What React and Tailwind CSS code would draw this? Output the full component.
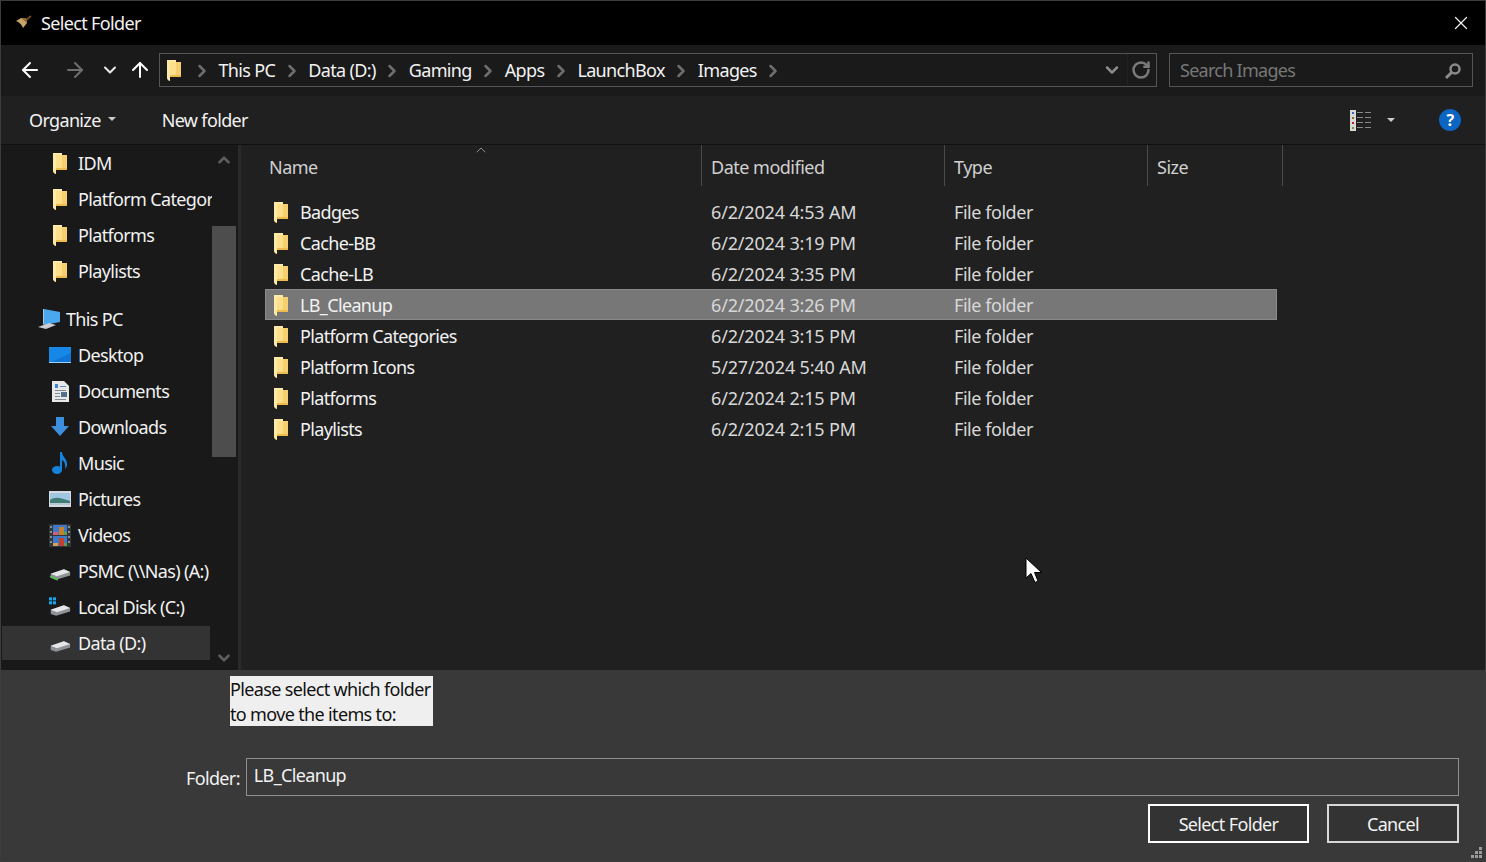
import React from 'react'
import { ArrowLeft, ArrowRight, ArrowUp, ChevronDown, ChevronRight, ChevronUp, RotateCw, X } from 'lucide-react'

function FolderIcon() {
  return (
    <svg width="14" height="21" viewBox="0 0 14 21" className="shrink-0">
      <path d="M0 0 L9 0 L9 2 L14 2 L14 17 L3 17 L3 21 L1 20 L0 18 Z" fill="#f7cf6e" />
      <path d="M0 0 L9 0 L9 2 L4 2 L3 17 L3 21 L1 20 L0 18 Z" fill="#fde9a8" />
      <path d="M3 2 L9 2 L9 14 L3 17 Z" fill="#fce08c" />
      <path d="M3 15 L14 15 L14 17 L3 17 Z" fill="#eebb4f" />
    </svg>
  )
}

function PcIcon() {
  return (
    <svg width="24" height="22" viewBox="0 0 24 22">
      <path d="M7 1 L23 4 L23 14 L7 17 Z" fill="#4aa8ee" />
      <path d="M6 1 L7 1 L7 17 L6 16 Z" fill="#a8c8e0" />
      <path d="M1 19 L12 15 L19 17 L9 21 Z" fill="#c9ccd0" />
    </svg>
  )
}

function DesktopIcon() {
  return (
    <svg width="22" height="16" viewBox="0 0 22 16">
      <rect width="22" height="16" fill="#1788e8" />
      <path d="M0 16 L22 6 L22 16 Z" fill="#0f76d6" />
      <rect y="15" width="22" height="1" fill="#9dd0f5" />
    </svg>
  )
}

function DocumentsIcon() {
  return (
    <svg width="17" height="21" viewBox="0 0 17 21">
      <path d="M0 0 H12 L17 5 V21 H0 Z" fill="#e6e8ea" />
      <rect x="3" y="3" width="3" height="4" fill="#3b87d4" />
      <rect x="8" y="5" width="6" height="1" fill="#5a8fc0" />
      <rect x="3" y="9" width="11" height="1" fill="#7f8a94" />
      <rect x="9" y="11" width="6" height="5" fill="#54718c" />
      <rect x="3" y="12" width="5" height="1" fill="#7f8a94" />
      <rect x="3" y="15" width="5" height="1" fill="#7f8a94" />
      <rect x="3" y="18" width="11" height="1" fill="#7f8a94" />
    </svg>
  )
}

function DownloadsIcon() {
  return (
    <svg width="20" height="20" viewBox="0 0 20 20">
      <path d="M6 0 H14 V9 H19 L10 19 L1 9 H6 Z" fill="#3c8fde" />
    </svg>
  )
}

function MusicIcon() {
  return (
    <svg width="18" height="24" viewBox="0 0 18 24">
      <ellipse cx="6" cy="19" rx="5" ry="4" fill="#1583dc" />
      <path d="M9 1 H11 C11 6 17 8 16 15 C15 17 14 18 14 18 C15 13 13 10 11 9 V19 H9 Z" fill="#1583dc" />
    </svg>
  )
}

function PicturesIcon() {
  return (
    <svg width="22" height="16" viewBox="0 0 22 16">
      <rect width="22" height="16" fill="#d6dade" />
      <rect x="1" y="2" width="20" height="12" fill="#9fc7e2" />
      <path d="M1 9 C6 5 12 7 21 10 V14 H1 Z" fill="#3f7d76" />
      <path d="M1 12 H21 V14 H1 Z" fill="#b9c8d6" />
    </svg>
  )
}

function VideosIcon() {
  return (
    <svg width="22" height="23" viewBox="0 0 22 23">
      <rect width="22" height="23" fill="#33373b" />
      <rect x="4" y="1" width="14" height="10" fill="#3e78c8" />
      <rect x="4" y="12" width="14" height="10" fill="#3e78c8" />
      <rect x="4" y="8" width="5" height="3" fill="#d0607c" />
      <rect x="10" y="3" width="5" height="8" fill="#c9802a" />
      <rect x="15" y="8" width="3" height="3" fill="#5aa04c" />
      <rect x="4" y="19" width="5" height="3" fill="#d0a05c" />
      <rect x="10" y="14" width="5" height="8" fill="#c9402a" />
      <rect x="15" y="19" width="3" height="3" fill="#5aa04c" />
      <g fill="#8a8f94">
        <rect x="1" y="2" width="2" height="2" /><rect x="1" y="7" width="2" height="2" />
        <rect x="1" y="12" width="2" height="2" /><rect x="1" y="17" width="2" height="2" />
        <rect x="19" y="2" width="2" height="2" /><rect x="19" y="7" width="2" height="2" />
        <rect x="19" y="12" width="2" height="2" /><rect x="19" y="17" width="2" height="2" />
      </g>
    </svg>
  )
}

function DriveIcon({ net, win }) {
  return (
    <svg width="25" height="22" viewBox="0 0 25 22">
      {win && (
        <g fill="#18a5ee">
          <rect x="0" y="0" width="3.500" height="3.500" />
          <rect x="4.500" y="0" width="3.500" height="3.500" />
          <rect x="0" y="4.500" width="3.500" height="3.500" />
          <rect x="4.500" y="4.500" width="3.500" height="3.500" />
        </g>
      )}
      <path d="M2 14 L17 9 L24 12 L24 16 L8 21 L2 19 Z" fill="#8f9296" />
      <path d="M2 14 L17 9 L24 12 L9 17 Z" fill="#e4e6e8" />
      {net && <path d="M1 16 L10 20 L10 22 L1 18 Z" fill="#4cc04c" />}
    </svg>
  )
}

function ViewIcon() {
  return (
    <svg width="22" height="21" viewBox="0 0 22 21">
      <rect width="6" height="21" fill="#d8d8d8" />
      <rect x="2" y="2" width="2" height="2" fill="#2f6fb0" />
      <rect x="2" y="7" width="2" height="2" fill="#8a6a30" />
      <rect x="2" y="12" width="2" height="2" fill="#c02020" />
      <rect x="2" y="17" width="2" height="2" fill="#6a9a30" />
      <g fill="#8a8a8a">
        <rect x="7" y="2" width="6" height="1" /><rect x="15" y="2" width="6" height="1" />
        <rect x="7" y="7" width="6" height="1" /><rect x="15" y="7" width="6" height="1" />
        <rect x="7" y="12" width="6" height="1" /><rect x="15" y="12" width="6" height="1" />
        <rect x="7" y="17" width="6" height="1" /><rect x="15" y="17" width="6" height="1" />
      </g>
    </svg>
  )
}

function BroomIcon() {
  return (
    <svg width="16" height="16" viewBox="0 0 16 16">
      <path d="M9 6 L15 1" stroke="#7a4a20" strokeWidth="1.800" />
      <path d="M0 6 L5 3 L10 3.500 L11 8 L7 13 C6 10 3 7 0 6 Z" fill="#c9a468" />
      <path d="M5 3 L10 3.500 L11 8 Z" fill="#8f6a3a" />
    </svg>
  )
}

function Cursor() {
  return (
    <svg width="18" height="27" viewBox="0 0 18 27" className="absolute left-[1024px] top-[556px]">
      <path d="M1 1 V21 L6 16.500 L10 25.500 L13 24 L9.500 15.500 L16.500 15.500 Z" fill="#fff" stroke="#000" strokeWidth="1" />
    </svg>
  )
}

const crumbs = ['This PC', 'Data (D:)', 'Gaming', 'Apps', 'LaunchBox', 'Images']

const sideTop = ['IDM', 'Platform Categories', 'Platforms', 'Playlists']
const sideItems = [
  ['Desktop', <DesktopIcon />],
  ['Documents', <DocumentsIcon />],
  ['Downloads', <DownloadsIcon />],
  ['Music', <MusicIcon />],
  ['Pictures', <PicturesIcon />],
  ['Videos', <VideosIcon />],
  ['PSMC (\\\\Nas) (A:)', <DriveIcon net />],
  ['Local Disk (C:)', <DriveIcon win />],
  ['Data (D:)', <DriveIcon />],
]

const files = [
  ['Badges', '6/2/2024 4:53 AM'],
  ['Cache-BB', '6/2/2024 3:19 PM'],
  ['Cache-LB', '6/2/2024 3:35 PM'],
  ['LB_Cleanup', '6/2/2024 3:26 PM'],
  ['Platform Categories', '6/2/2024 3:15 PM'],
  ['Platform Icons', '5/27/2024 5:40 AM'],
  ['Platforms', '6/2/2024 2:15 PM'],
  ['Playlists', '6/2/2024 2:15 PM'],
]

function SideRow({ icon, label, selected }) {
  return (
    <div className={`flex items-center pl-[47px] w-[210px] overflow-hidden whitespace-nowrap ${selected ? 'h-[34px] my-[1px] bg-no-repeat bg-[length:208px_100%] bg-[linear-gradient(#333333,#333333)]' : 'h-9'}`}>
      <div className="w-[29px] shrink-0 flex justify-center pr-[7px]">{icon}</div>
      <span>{label}</span>
    </div>
  )
}

export default function App() {
  return (
    <div className="w-[1486px] h-[862px] overflow-hidden relative bg-[#393939] border border-[#3c3c3c] text-[18px] text-[#f2f2f2] font-['Open_Sans','Noto_Sans',sans-serif] tracking-[-0.65px]">
      {/* Title bar */}
      <div className="h-[44px] bg-black flex items-center pl-[15px] pr-[13px]">
        <BroomIcon />
        <span className="ml-[9px]">Select Folder</span>
        <X className="ml-auto" size={22} strokeWidth={1.3} />
      </div>

      {/* Address bar */}
      <div className="h-[51px] bg-[#1a1a1a] flex items-center pl-[17px] pr-[12px] pb-[1px]">
        <ArrowLeft size={24} strokeWidth={2} className="text-white" />
        <ArrowRight size={24} strokeWidth={2} className="ml-[21px] text-[#6e6e6e]" />
        <ChevronDown size={20} strokeWidth={2.5} className="ml-[13px] text-[#e8e8e8]" />
        <ArrowUp size={24} strokeWidth={2} className="ml-[8px] text-white" />
        <div className="ml-[7px] h-[34px] w-[998px] border border-[#555555] flex items-center pl-[7px] pr-[2px]">
          <FolderIcon />
          <div className="flex items-center ml-[11px] pt-[1px]">
            {crumbs.map((c) => (
              <React.Fragment key={c}>
                <ChevronRight size={20} strokeWidth={3} className="text-[#6e6e6e]" />
                <span className="mx-[6.5px]">{c}</span>
              </React.Fragment>
            ))}
            <ChevronRight size={20} strokeWidth={3} className="text-[#6e6e6e]" />
          </div>
          <ChevronDown size={20} strokeWidth={3} className="ml-auto mr-[5px] text-[#8a8a8a]" />
          <div className="h-full w-[1px] bg-[#222222]" />
          <RotateCw size={20} strokeWidth={3} className="mx-[3px] text-[#7a7a7a]" />
        </div>
        <div className="ml-[12px] h-[34px] w-[304px] border border-[#555555] flex items-center pl-[10px] pr-[10px] pt-[1px] text-[#777777] tracking-[-0.73px]">
          <span>Search Images</span>
          <svg width="18" height="18" viewBox="0 0 18 18" className="ml-auto">
            <circle cx="11" cy="7" r="4.500" fill="none" stroke="#8a8a8a" strokeWidth="2.500" />
            <path d="M7.500 10.500 L2 16" stroke="#8a8a8a" strokeWidth="3" />
          </svg>
        </div>
      </div>

      {/* Toolbar */}
      <div className="h-[48px] bg-[#202020] flex items-center pl-[28px] pr-[24px]">
        <span>Organize</span>
        <span className="ml-[7px] mt-[-2px] w-0 h-0 border-x-[4px] border-x-transparent border-t-[4px] border-t-[#cccccc]" />
        <span className="ml-[46px]">New folder</span>
        <div className="ml-auto mr-[15px]"><ViewIcon /></div>
        <span className="mr-[44px] w-0 h-0 border-x-[4px] border-x-transparent border-t-[4px] border-t-[#cccccc]" />
        <div className="w-[22px] h-[22px] rounded-full bg-[#0a66c2] flex items-center justify-center text-[16px] font-bold text-white">?</div>
      </div>

      {/* Middle */}
      <div className="h-[526px] flex border-t border-[#111111]">
        <div className="w-[237px] pl-[1px] bg-[#191919] flex">
          <div className="w-[210px] overflow-hidden">
            {sideTop.map((s) => (
              <SideRow key={s} icon={<FolderIcon />} label={s} />
            ))}
            <div className="h-9 mt-3 flex items-center pl-[35px]">
              <PcIcon />
              <span className="ml-[5px]">This PC</span>
            </div>
            {sideItems.map(([label, icon]) => (
              <SideRow key={label} icon={icon} label={label} selected={label === 'Data (D:)'} />
            ))}
          </div>
          <div className="w-[24px] flex flex-col items-center">
            <ChevronUp size={18} strokeWidth={3.5} className="mt-[6px] text-[#5e5e5e]" />
            <div className="w-full h-[231px] mt-[57px] bg-[#4d4d4d]" />
            <ChevronDown size={18} strokeWidth={3.5} className="mt-[192px] text-[#5e5e5e]" />
          </div>
        </div>
        <div className="w-[3px] bg-[#2a2a2a]" />

        {/* File list */}
        <div className="flex-1 bg-[#202020] pl-[24px] relative">
          <ChevronUp size={16} strokeWidth={1.2} className="absolute left-[232px] top-[-3px] text-[#aaaaaa]" />
          <div className="h-[41px] flex text-[#d0d0d0] tracking-[-0.5px]">
            <div className="w-[437px] pl-[4px] pt-[4px] border-r border-[#4a4a4a] flex items-center">Name</div>
            <div className="w-[243px] pl-[9px] pt-[4px] border-r border-[#4a4a4a] flex items-center">Date modified</div>
            <div className="w-[203px] pl-[9px] pt-[4px] border-r border-[#4a4a4a] flex items-center">Type</div>
            <div className="w-[135px] pl-[9px] pt-[4px] border-r border-[#4a4a4a] flex items-center">Size</div>
          </div>
          <div className="mt-[10px] w-[1012px]">
            {files.map(([name, date]) => {
              const selected = name === 'LB_Cleanup'
              return (
                <div key={name} className={`h-[31px] flex items-center pt-[2px] border ${selected ? 'bg-[#777777] border-[#8a8a8a]' : 'border-transparent'}`}>
                  <div className="w-[436px] flex items-center pl-[8px]">
                    <FolderIcon />
                    <span className="ml-[12px]">{name}</span>
                  </div>
                  <div className="w-[243px] pl-[9px] text-[#d8d8d8] tracking-[-0.16px]">{date}</div>
                  <div className="pl-[9px] text-[#d8d8d8] tracking-[-0.45px]">File folder</div>
                </div>
              )
            })}
          </div>
        </div>
      </div>

      {/* Footer */}
      <div className="h-[191px] bg-[#393939] relative">
        <div className="ml-[229px] mt-[6px] pt-[1px] w-[203px] h-[50px] bg-[#efefef] text-[#111111] leading-[25px] inline-block align-top whitespace-nowrap">
          Please select which folder<br />to move the items to:
        </div>
        <div className="flex items-center mt-[32px] pl-[185px] pr-[26px]">
          <span className="mt-[2px]">Folder:</span>
          <div className="ml-[6px] flex-1 h-[38px] border border-[#8f8f8f] pl-[7px] pb-[3px] flex items-center">LB_Cleanup</div>
        </div>
        <div className="flex justify-end mt-[8px] pr-[26px] gap-[18px]">
          <div className="w-[161px] h-[39px] pt-[1px] border-2 border-white bg-[#333333] flex items-center justify-center">Select Folder</div>
          <div className="w-[132px] h-[39px] pt-[1px] border-2 border-[#d8d8d8] bg-[#333333] flex items-center justify-center">Cancel</div>
        </div>
        <svg width="12" height="12" viewBox="0 0 12 12" className="absolute right-[2px] bottom-[2px]">
          <g fill="#9a9a9a">
            <rect x="8" y="0" width="3" height="3" />
            <rect x="4" y="4" width="3" height="3" /><rect x="8" y="4" width="3" height="3" />
            <rect x="0" y="8" width="3" height="3" /><rect x="4" y="8" width="3" height="3" /><rect x="8" y="8" width="3" height="3" />
          </g>
        </svg>
      </div>
      <Cursor />
    </div>
  )
}
